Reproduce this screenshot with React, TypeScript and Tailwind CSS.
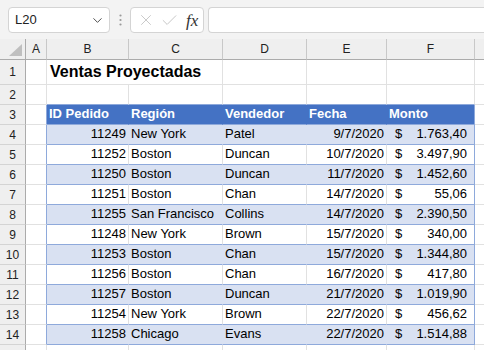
import React from 'react';
import { ChevronDown, X, Check } from 'lucide-react';

type Sale = {
  id: string;
  region: string;
  seller: string;
  date: string;
  amount: string;
};

const SALES: Sale[] = [
  { id: '11249', region: 'New York', seller: 'Patel', date: '9/7/2020', amount: '1.763,40' },
  { id: '11252', region: 'Boston', seller: 'Duncan', date: '10/7/2020', amount: '3.497,90' },
  { id: '11250', region: 'Boston', seller: 'Duncan', date: '11/7/2020', amount: '1.452,60' },
  { id: '11251', region: 'Boston', seller: 'Chan', date: '14/7/2020', amount: '55,06' },
  { id: '11255', region: 'San Francisco', seller: 'Collins', date: '14/7/2020', amount: '2.390,50' },
  { id: '11248', region: 'New York', seller: 'Brown', date: '15/7/2020', amount: '340,00' },
  { id: '11253', region: 'Boston', seller: 'Chan', date: '15/7/2020', amount: '1.344,80' },
  { id: '11256', region: 'Boston', seller: 'Chan', date: '16/7/2020', amount: '417,80' },
  { id: '11257', region: 'Boston', seller: 'Duncan', date: '21/7/2020', amount: '1.019,90' },
  { id: '11254', region: 'New York', seller: 'Brown', date: '22/7/2020', amount: '456,62' },
  { id: '11258', region: 'Chicago', seller: 'Evans', date: '22/7/2020', amount: '1.514,88' },
];

const COLS = 'grid grid-cols-[26px_21px_82px_94px_84px_80px_88px_1fr]';
const ROW_HEAD =
  'flex items-center justify-center border-r border-b border-r-[#ababab] border-b-[#d4d4d4] bg-[#efefef] text-[12px] text-[#222]';
const GRID_CELL = 'border-r border-b border-[#e1e1e1]';
const CELL_TEXT = 'flex items-end pb-[2px] px-[2px] text-[13px] leading-[16px] whitespace-nowrap';

const Toolbar: React.FC = () => (
  <div className="flex h-[39px] items-start bg-[#f3f3f3] pl-[8px] pt-[7px]">
    <div className="flex h-[26px] w-[102px] items-center justify-between rounded-[4px] border border-[#d4d4d4] bg-white pl-[6px] pr-[4px]">
      <span className="text-[13px] text-[#222]">L20</span>
      <ChevronDown className="h-[15px] w-[15px] text-[#444]" strokeWidth={1.5} />
    </div>
    <div className="flex h-[26px] w-[20px] items-center justify-center">
      <svg width="3" height="12" viewBox="0 0 3 12">
        <circle cx="1.5" cy="1.5" r="1.1" fill="#9a9a9a" />
        <circle cx="1.5" cy="6" r="1.1" fill="#9a9a9a" />
        <circle cx="1.5" cy="10.5" r="1.1" fill="#9a9a9a" />
      </svg>
    </div>
    <div className="flex h-[26px] w-[74px] items-center rounded-[4px] border border-[#d4d4d4] bg-white pl-[6px]">
      <X className="h-[18px] w-[18px] text-[#c4c4c4]" strokeWidth={1.2} />
      <Check className="ml-[5px] h-[19px] w-[19px] text-[#c4c4c4]" strokeWidth={1.2} />
      <span className="ml-[7px] text-[17px] italic leading-none text-[#333] [font-family:'Liberation_Serif',serif]">
        fx
      </span>
    </div>
    <div className="ml-[4px] h-[26px] flex-1 rounded-l-[4px] border border-r-0 border-[#d4d4d4] bg-white" />
  </div>
);

const ColumnHeader: React.FC = () => (
  <div className={`${COLS} h-[21px] bg-[#efefef] text-[12px] text-[#222]`}>
    <div className="relative border-r border-b border-r-[#ababab] border-b-[#ababab]">
      <svg className="absolute bottom-[3px] right-[3px]" width="13" height="12" viewBox="0 0 13 12">
        <polygon points="13,0 13,12 0,12" fill="#bfbfbf" />
      </svg>
    </div>
    {['A', 'B', 'C', 'D', 'E', 'F', ''].map((l, i) => (
      <div
        key={i}
        className={`flex items-center justify-center border-b border-b-[#ababab] ${l ? 'border-r border-r-[#c8c8c8]' : ''}`}
      >
        {l}
      </div>
    ))}
  </div>
);

const App: React.FC = () => {
  return (
    <div className="h-[350px] w-[484px] overflow-hidden bg-white text-black [font-family:'Liberation_Sans',Arial,sans-serif]">
      <Toolbar />
      <ColumnHeader />

      {/* row 1: title */}
      <div className={`${COLS} h-[25px]`}>
        <div className={ROW_HEAD}>1</div>
        <div className={GRID_CELL} />
        <div className="col-span-2 flex items-end border-r border-b border-[#e1e1e1] px-[3px] pb-[3px]">
          <span className="text-[16px] font-bold leading-[18px]">Ventas Proyectadas</span>
        </div>
        <div className={GRID_CELL} />
        <div className={GRID_CELL} />
        <div className={GRID_CELL} />
        <div className="border-b border-[#e1e1e1]" />
      </div>

      {/* row 2 */}
      <div className={`${COLS} h-[20px]`}>
        <div className={ROW_HEAD}>2</div>
        <div className={GRID_CELL} />
        <div className="border-r border-b border-r-[#e1e1e1] border-b-[#8ea9db]" />
        <div className="border-r border-b border-r-[#e1e1e1] border-b-[#8ea9db]" />
        <div className="border-r border-b border-r-[#e1e1e1] border-b-[#8ea9db]" />
        <div className="border-r border-b border-r-[#e1e1e1] border-b-[#8ea9db]" />
        <div className="border-r border-b border-r-[#e1e1e1] border-b-[#8ea9db]" />
        <div className="border-b border-[#e1e1e1]" />
      </div>

      {/* row 3: table header */}
      <div className={`${COLS} h-[20px]`}>
        <div className={ROW_HEAD}>3</div>
        <div className="border-r border-b border-r-[#8ea9db] border-b-[#e1e1e1]" />
        {['ID Pedido', 'Región', 'Vendedor', 'Fecha', 'Monto'].map((h, i) => (
          <div
            key={h}
            className={`${CELL_TEXT} border-r border-b border-b-[#8ea9db] bg-[#4472c4] font-bold text-white ${i === 4 ? 'border-r-[#8ea9db]' : 'border-r-[#4472c4]'}`}
          >
            {h}
          </div>
        ))}
        <div className="border-b border-[#e1e1e1]" />
      </div>

      {SALES.map((s, idx) => {
        const banded = idx % 2 === 0;
        const fill = banded ? 'bg-[#d9e1f2] border-r-[#d9e1f2]' : 'bg-white border-r-[#e1e1e1]';
        return (
          <div key={s.id} className={`${COLS} h-[20px]`}>
            <div className={ROW_HEAD}>{idx + 4}</div>
            <div className="border-r border-b border-r-[#8ea9db] border-b-[#e1e1e1]" />
            <div className={`${CELL_TEXT} justify-end border-r border-b border-b-[#8ea9db] ${fill}`}>{s.id}</div>
            <div className={`${CELL_TEXT} border-r border-b border-b-[#8ea9db] ${fill}`}>{s.region}</div>
            <div className={`${CELL_TEXT} border-r border-b border-b-[#8ea9db] ${fill}`}>{s.seller}</div>
            <div className={`${CELL_TEXT} justify-end border-r border-b border-b-[#8ea9db] ${fill}`}>{s.date}</div>
            <div
              className={`${CELL_TEXT} justify-between border-r border-b border-b-[#8ea9db] border-r-[#8ea9db] pl-[8px] pr-[7px] ${banded ? 'bg-[#d9e1f2]' : 'bg-white'}`}
            >
              <span>$</span>
              <span>{s.amount}</span>
            </div>
            <div className="border-b border-[#e1e1e1]" />
          </div>
        );
      })}

      {/* row 15, cut off at the window edge */}
      <div className={`${COLS} h-[20px]`}>
        <div className="border-r border-r-[#ababab] bg-[#efefef]" />
        <div className="border-r border-r-[#e1e1e1]" />
        <div className="border-r border-r-[#e1e1e1]" />
        <div className="border-r border-r-[#e1e1e1]" />
        <div className="border-r border-r-[#e1e1e1]" />
        <div className="border-r border-r-[#e1e1e1]" />
        <div className="border-r border-r-[#e1e1e1]" />
        <div />
      </div>
    </div>
  );
};

export default App;
